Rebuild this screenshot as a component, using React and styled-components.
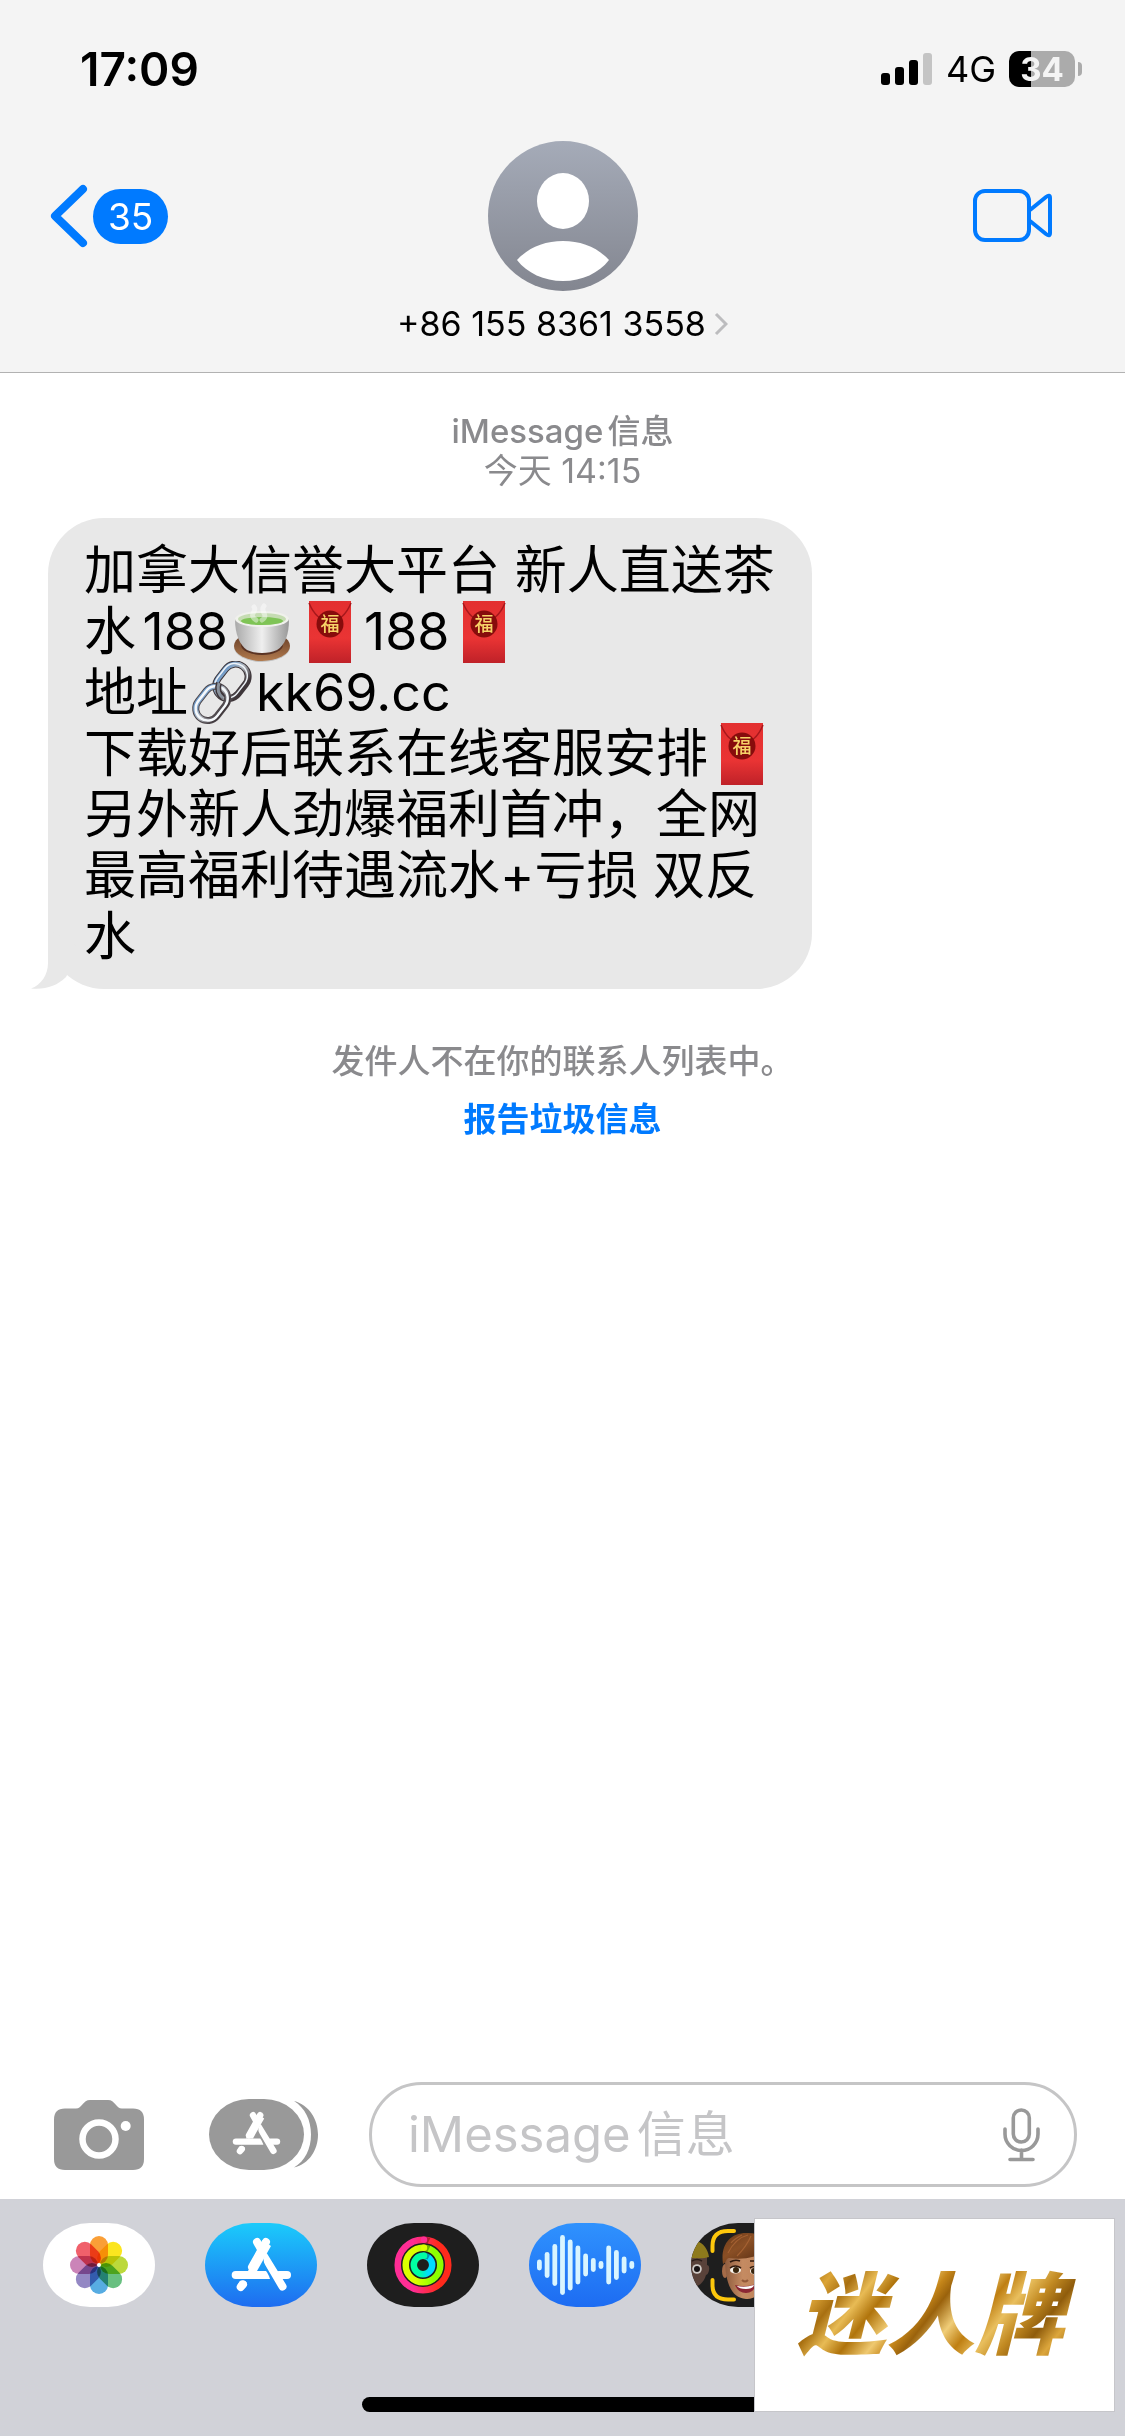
import React, { useState } from "react";
import styled, { createGlobalStyle } from "styled-components";

const GlobalStyle = createGlobalStyle`
  * {
    box-sizing: border-box;
  }
  body {
    margin: 0;
    background: #fff;
    overflow-x: hidden;
    font-family: Inter, "Noto Sans CJK SC", sans-serif;
    text-autospace: normal;
  }
  button, input {
    font: inherit;
    color: inherit;
    border: 0;
    padding: 0;
    background: none;
  }
  svg {
    display: block;
    flex: none;
  }
`;

const Screen = styled.div`
  display: flex;
  flex-direction: column;
  min-height: 100vh;
  overflow: hidden;
`;
const Header = styled.header`
  padding-bottom: 28px;
  background: #f4f4f4;
  border-bottom: 1px solid #b2b2b2;
`;
const StatusBar = styled.div`
  display: flex;
  align-items: center;
  justify-content: space-between;
  padding: 38px 43px 41px 80px;
  line-height: 62px;
`;
const Clock = styled.div`
  font-size: 46px;
  font-weight: 600;
`;
const StatusIcons = styled.div`
  display: flex;
  align-items: center;
  gap: 13px;
`;
const Network = styled.span`
  font-size: 36px;
`;
const Battery = styled.div`
  display: flex;
  align-items: center;
  gap: 3px;
`;
const BatteryBody = styled.div`
  width: 66px;
  height: 36px;
  border-radius: 10px;
  background: linear-gradient(90deg, #000 33%, #ababab 33%);
  color: #f4f4f4;
  font-size: 33px;
  font-weight: 700;
  line-height: 36px;
  text-align: center;
`;
const BatteryTip = styled.div`
  width: 4px;
  height: 14px;
  border-radius: 0 4px 4px 0;
  background: #ababab;
`;
const Nav = styled.nav`
  display: grid;
  grid-template-columns: 1fr auto 1fr;
  align-items: center;
  padding: 0 50px;
`;
const BackButton = styled.button`
  display: flex;
  align-items: center;
  justify-self: start;
  gap: 5px;
`;
const Badge = styled.span`
  padding: 0 15px;
  border-radius: 28px;
  background: #007aff;
  color: #fff;
  font-size: 37px;
  line-height: 55px;
`;
const VideoButton = styled.button`
  justify-self: end;
  padding-right: 22px;
`;
const ContactButton = styled.button`
  display: flex;
  align-items: center;
  gap: 8px;
  margin: 13px auto 0;
  font-size: 34px;
  line-height: 40px;
`;

const Conversation = styled.main`
  flex: 1;
  padding: 39px 48px;
`;
const Stamp = styled.div`
  color: #8a8a8d;
  font-size: ${(props) => (props.$strong ? 33 : 34)}px;
  font-weight: ${(props) => (props.$strong ? 500 : 400)};
  line-height: 39px;
  text-align: center;
`;
const Bubble = styled.div`
  position: relative;
  width: fit-content;
  max-width: 765px;
  margin-top: 28px;
  padding: 22px 36px;
  border-radius: 56px;
  background: #e8e8e8;
  font-size: 52px;
  line-height: 61px;
`;
const Tail = styled.svg`
  position: absolute;
  left: -17px;
  bottom: 0;
`;
const Emoji = styled.svg`
  display: inline-block;
  margin: -14px 0 -6px;
  vertical-align: middle;
`;
const Notice = styled.p`
  margin: 52px 0 0;
  color: #8a8a8d;
  font-size: 33px;
  font-weight: 500;
  line-height: 40px;
  text-align: center;
`;
const ReportButton = styled.button`
  display: block;
  margin: 18px auto 0;
  color: #007aff;
  font-size: 33px;
  font-weight: 700;
  line-height: 40px;
`;

const Composer = styled.form`
  display: flex;
  align-items: center;
  padding: 22px 48px 12px 54px;
  color: #999;
`;
const AppsButton = styled.button`
  margin: 0 51px 0 65px;
`;
const Field = styled.label`
  display: flex;
  flex: 1;
  align-items: center;
  min-width: 0;
  height: 105px;
  padding: 0 34px 0 36px;
  border: 3px solid #c5c5c6;
  border-radius: 53px;
`;
const TextInput = styled.input`
  flex: 1;
  min-width: 0;
  color: #000;
  font-size: 49px;
  outline: none;
  &::placeholder {
    color: #c5c5c7;
    opacity: 1;
  }
`;

const Drawer = styled.footer`
  position: relative;
  padding: 24px 0 24px 43px;
  background: #d1d2d8;
`;
const AppRow = styled.div`
  display: flex;
  gap: 50px;
`;
const AppButton = styled.button`
  flex: none;
  width: 112px;
  height: 84px;
  border-radius: 47px / 42px;
  background: ${(props) => props.$fill};
  overflow: hidden;
`;
const HomeBar = styled.div`
  width: 401px;
  height: 15px;
  margin: 90px auto 0;
  border-radius: 8px;
  background: #000;
`;
const HomeRow = styled.div`
  padding-right: 43px;
`;
const Stamped = styled.div`
  position: absolute;
  top: 19px;
  right: 10px;
  display: flex;
  align-items: center;
  justify-content: center;
  width: 361px;
  height: 194px;
  border: 1px solid #c6c6ca;
  background: #fff;
`;
const GoldText = styled.span`
  padding: 0 16px 0 8px;
  background: linear-gradient(
    128deg,
    #a06a0e 8%,
    #dba437 15%,
    #a86f10 21%,
    #e8bb55 27%,
    #b0740c 33%,
    #efc970 40%,
    #c5861a 45%,
    #9a620c 49%,
    #f0cd78 56%,
    #bf7f12 62%,
    #e9bf5e 68%,
    #c28a22 74%,
    #8f5c0c 80%,
    #dca63c 86%,
    #9b650e 93%
  );
  background-clip: text;
  color: transparent;
  font-size: 89px;
  font-style: italic;
  font-weight: 900;
  line-height: 120px;
`;

const SignalIcon = () => (
  <svg width="52" height="32" viewBox="0 0 52 32">
    <rect x="0" y="20" width="9" height="12" rx="3" />
    <rect x="14" y="14" width="9" height="18" rx="3" />
    <rect x="28" y="7" width="9" height="25" rx="3" />
    <rect x="42" y="0" width="9" height="32" rx="3" fill="#c4c4c4" />
  </svg>
);

const BackIcon = () => (
  <svg width="38" height="64" viewBox="0 0 38 64" fill="none">
    <path
      d="M33 5 5 32l28 27"
      stroke="#007aff"
      strokeWidth="8"
      strokeLinecap="round"
      strokeLinejoin="round"
    />
  </svg>
);

const VideoIcon = () => (
  <svg width="80" height="54" viewBox="0 0 80 54" fill="none">
    <g stroke="#007aff" strokeWidth="4" strokeLinejoin="round">
      <rect x="2" y="2" width="54" height="49" rx="10" />
      <path d="M57 21 73 8Q77 5 77 9V44Q77 48 73 45L57 32" />
    </g>
  </svg>
);

const Avatar = () => (
  <svg width="150" height="150" viewBox="0 0 150 150">
    <defs>
      <linearGradient id="avatar" x1="0" y1="0" x2="0" y2="1">
        <stop offset="0" stopColor="#a5abb8" />
        <stop offset="1" stopColor="#838690" />
      </linearGradient>
    </defs>
    <circle cx="75" cy="75" r="75" fill="url(#avatar)" />
    <ellipse cx="75" cy="60" rx="26" ry="28" fill="#fff" />
    <path
      d="M29 119C41 106 57 100 75 100s34 6 46 19c-10 13-27 21-46 21s-36-8-46-21Z"
      fill="#fff"
    />
  </svg>
);

const DisclosureIcon = () => (
  <svg width="14" height="24" viewBox="0 0 14 24" fill="none">
    <path d="M2 2l10 10L2 22" stroke="#bcbcbe" strokeWidth="3" />
  </svg>
);

const TeaEmoji = () => (
  <Emoji width="68" height="64" viewBox="0 0 68 64" role="img" aria-label="茶">
    <defs>
      <linearGradient id="cup" x1="0" y1="0" x2="1" y2="0">
        <stop offset="0" stopColor="#a9a9a9" />
        <stop offset=".5" stopColor="#efefef" />
        <stop offset="1" stopColor="#989898" />
      </linearGradient>
      <linearGradient id="saucer" x1="0" y1="0" x2="0" y2="1">
        <stop offset="0" stopColor="#5c3420" />
        <stop offset="1" stopColor="#b27b4e" />
      </linearGradient>
    </defs>
    <ellipse cx="34" cy="47" rx="28" ry="15" fill="#8c8c8c" opacity=".4" />
    <ellipse cx="34" cy="46" rx="28" ry="15" fill="url(#saucer)" />
    <ellipse cx="34" cy="45" rx="21" ry="10" fill="#5a3323" />
    <path
      d="M7 19c0 16 5 26 12 31 8 4 22 4 30 0 8-5 12-15 12-31Z"
      fill="url(#cup)"
    />
    <ellipse cx="34" cy="19" rx="27" ry="8" fill="#f0f1ec" />
    <ellipse cx="34" cy="19" rx="24" ry="6" fill="#c5dcb2" />
    <ellipse cx="34" cy="21" rx="21" ry="4" fill="#7fc456" />
    <path
      d="M28 20c-9-6 2-8-2-13M34 20c8-5-3-8 2-14"
      fill="none"
      stroke="#fff"
      strokeWidth="5"
      strokeLinecap="round"
      opacity=".45"
    />
  </Emoji>
);

const EnvelopeEmoji = () => (
  <Emoji width="68" height="64" viewBox="0 0 68 64" role="img" aria-label="红包">
    <defs>
      <linearGradient id="envelope" x1="0" y1="0" x2="0" y2="1">
        <stop offset="0" stopColor="#e33030" />
        <stop offset=".6" stopColor="#ea3434" />
        <stop offset="1" stopColor="#bf2128" />
      </linearGradient>
    </defs>
    <rect x="13" y="1" width="42" height="62" fill="url(#envelope)" />
    <path
      d="M13 3c5 12 12 18 21 18S50 15 55 3"
      fill="none"
      stroke="#a8181c"
      strokeWidth="1.5"
    />
    <circle cx="34" cy="24" r="13.5" fill="#870c0c" />
    <text
      x="34"
      y="31"
      fill="#f7d368"
      fontSize="19"
      fontWeight="500"
      fontFamily='"Noto Sans CJK SC", sans-serif'
      textAnchor="middle"
    >
      福
    </text>
  </Emoji>
);

const LinkEmoji = () => (
  <Emoji width="68" height="64" viewBox="0 0 68 64" role="img" aria-label="链接">
    <defs>
      <linearGradient id="steel" x1="0" y1="0" x2="1" y2="0">
        <stop offset="0" stopColor="#6f9ac8" />
        <stop offset=".5" stopColor="#b4b9c0" />
        <stop offset="1" stopColor="#3d3539" />
      </linearGradient>
    </defs>
    <g fill="none">
      <g transform="rotate(38 44 21)">
        <rect x="31" y="2" width="25" height="37" rx="12.5" stroke="#3d3539" strokeWidth="7" />
        <rect x="31" y="2" width="25" height="37" rx="12.5" stroke="url(#steel)" strokeWidth="5" />
        <rect x="30" y="2" width="25" height="37" rx="12.5" stroke="#eef3f8" strokeWidth="1.5" />
      </g>
      <g transform="rotate(38 24 42)">
        <rect x="12" y="24" width="24" height="37" rx="12" stroke="#4c4549" strokeWidth="7" />
        <rect x="12" y="24" width="24" height="37" rx="12" stroke="url(#steel)" strokeWidth="5" />
        <rect x="12" y="24" width="24" height="37" rx="12" stroke="#f5f8fb" strokeWidth="2.5" />
      </g>
      <path d="M31 22c-2 6-1 11 4 15" stroke="#3d3539" strokeWidth="6" />
      <path d="M31 22c-2 6-1 11 4 15" stroke="#8a929c" strokeWidth="3" />
    </g>
  </Emoji>
);

const CameraIcon = () => (
  <svg width="90" height="70" viewBox="0 0 90 70" fill="currentColor">
    <path d="M11 8.500H22C28 8.500 29 0 36 0H54C61 0 62 8.500 68 8.500H79Q90 8.500 90 19.500V59Q90 70 79 70H11Q0 70 0 59V19.500Q0 8.500 11 8.500Z" />
    <circle cx="45" cy="39" r="16.500" fill="none" stroke="#fff" strokeWidth="6.500" />
    <circle cx="71.700" cy="26" r="5" fill="#fff" />
  </svg>
);

// The "A" made of three sticks, drawn in a 59x53 box
const AppStoreGlyph = () => (
  <g fill="#fff" stroke="none">
    <g stroke="#fff" strokeWidth="8" strokeLinecap="round" fill="none">
      <path d="M25 4l4.500 8" />
      <path d="M34 4 20 29" />
      <path d="M47 37h8" />
      <path d="M11 46.500 8.700 49" />
    </g>
    <path d="M30.500 2 16 33h9l14-25Z" />
    <path d="M3.700 33H34c1.500 2 3 4.500 4 8H3.700a4 4 0 0 1 0-8Z" />
    <path d="M34.700 15c-3.500 4-4 8-1.500 12L47 50.500a4 4 0 0 0 7-4Z" />
    <path d="M7.800 43c3-1.200 6 0 7 1.500l-2.800 5.300-6.500-3Z" />
  </g>
);

const AppsIcon = () => (
  <svg width="109" height="71" viewBox="0 0 109 71" fill="currentColor">
    <rect width="95" height="71" rx="40" ry="35.500" />
    <path d="M85 2C100 6 109 20 109 35.500S100 65 85 68.500C96 62 102 50 102 35.500S96 9 85 2Z" />
    <g transform="translate(24 13) scale(.8)">
      <AppStoreGlyph />
    </g>
  </svg>
);

const MicIcon = () => (
  <svg width="37" height="54" viewBox="0 0 37 54" fill="none">
    <g stroke="#999" strokeWidth="3.600" strokeLinecap="round">
      <rect x="10.300" y="2" width="16" height="32" rx="8" />
      <path d="M2 21v5a16.400 16.400 0 0 0 33 0v-5M18.500 42v9M7 51.500h23" />
    </g>
  </svg>
);

const PETALS = [
  "#fa9f37",
  "#fbe51f",
  "#bcd93b",
  "#68c080",
  "#57ace2",
  "#9488c4",
  "#cb84b8",
  "#f0606b",
];

const PhotosArt = () => (
  <svg width="112" height="84" viewBox="0 0 112 84">
    <g transform="translate(56 42)">
      {PETALS.map((color, idx) => (
        <rect
          key={color}
          x="-9"
          y="-29"
          width="18"
          height="28"
          rx="9"
          fill={color}
          transform={`rotate(${idx * 45})`}
          style={{ mixBlendMode: "multiply" }}
        />
      ))}
      <circle r="2" fill="#fff" />
    </g>
  </svg>
);

const AppStoreArt = () => (
  <svg width="112" height="84" viewBox="0 0 112 84">
    <g transform="translate(27 15)">
      <AppStoreGlyph />
    </g>
  </svg>
);

const RINGS = [
  { id: "move", r: 25.3, from: "#ff2d95", to: "#ff2a1c" },
  { id: "exercise", r: 17.3, from: "#dcff00", to: "#8dff00" },
  { id: "stand", r: 9.2, from: "#00ffa3", to: "#00dcff" },
];

const FitnessArt = () => (
  <svg width="112" height="84" viewBox="0 0 112 84" fill="none">
    {RINGS.map(({ id, r, from, to }) => (
      <g key={id}>
        <linearGradient id={id} x1="0" y1="0" x2="1" y2="0">
          <stop offset=".3" stopColor={from} />
          <stop offset=".8" stopColor={to} />
        </linearGradient>
        <circle cx="56" cy="42" r={r} stroke={`url(#${id})`} strokeWidth="6.500" />
        <path
          d={`M57 ${42 - r}q3 0 5 1`}
          stroke="#000"
          strokeWidth="6"
          opacity=".3"
        />
        <circle cx="57" cy={42 - r} r="3.200" fill={from} />
      </g>
    ))}
  </svg>
);

const WAVE = [11, 26, 42, 60, 51, 39, 23, 14, 8, 39, 30, 17, 8];

const AudioArt = () => (
  <svg width="112" height="84" viewBox="0 0 112 84" fill="#d9f5ff">
    {WAVE.map((height, idx) => (
      <rect
        key={idx}
        x={8 + idx * 7.7}
        y={42 - height / 2}
        width="4.800"
        height={height}
        rx="2.400"
      />
    ))}
  </svg>
);

const MemojiArt = () => (
  <svg width="112" height="84" viewBox="0 0 112 84">
    <defs>
      <linearGradient id="hair" x1="0" y1="0" x2="1" y2="1">
        <stop offset="0" stopColor="#6b3918" />
        <stop offset=".4" stopColor="#8a4f25" />
        <stop offset="1" stopColor="#4a250e" />
      </linearGradient>
      <linearGradient id="skin" x1="0" y1="0" x2="1" y2="0">
        <stop offset="0" stopColor="#8f5c3e" />
        <stop offset=".4" stopColor="#c58b62" />
        <stop offset="1" stopColor="#bb8058" />
      </linearGradient>
    </defs>
    <path d="M0 30h16v12c4 0 2 10-1 10-2 8-8 12-15 13Z" fill="#59423a" />
    <path d="M0 18h6c6 2 11 8 12 16-6 2-12 1-18 1Z" fill="#8e7a1c" />
    <circle cx="6" cy="46" r="4.800" fill="#cfcac6" />
    <circle cx="6" cy="46" r="3" fill="#191313" />
    <path d="M1 38q5-3 10 0" fill="none" stroke="#2c1e1a" strokeWidth="1.500" />
    <g fill="none" stroke="#fdc70c" strokeWidth="4" strokeLinecap="round">
      <path d="M21.500 28v-5Q21.500 8 37 8h6" />
      <path d="M21.500 57v5Q21.500 76.500 37 76.500h6" />
    </g>
    <ellipse cx="34" cy="48" rx="3" ry="7" fill="#a56b48" />
    <path
      d="M34 35c0 24 6 40 21 41s23-17 23-41c-4-14-40-14-44 0Z"
      fill="url(#skin)"
    />
    <path
      d="M32 41c-3-20 8-32 25-31 15 0 26 10 23 27l-3 4c-3-3-4-7-4-12-7 5-20 8-35 6-3 0-2 4-6 6Z"
      fill="url(#hair)"
    />
    <path
      d="M37 30c5-10 12-16 20-18M46 33c6-6 11-13 14-20M40 20c3-4 7-6 11-8"
      fill="none"
      stroke="#b06a38"
      strokeWidth="1.200"
      opacity=".7"
    />
    <g fill="#f7f2ea">
      <ellipse cx="44.500" cy="47" rx="5.500" ry="3.600" />
      <ellipse cx="64" cy="48" rx="5" ry="3.600" />
    </g>
    <circle cx="45" cy="47" r="3" fill="#38240c" />
    <circle cx="63" cy="48" r="3" fill="#38240c" />
    <path
      d="M39 45q5-4 11 0M39 39q5-3 10-1M59 45q4-3 9 0M59 38h8"
      fill="none"
      stroke="#301a0e"
      strokeWidth="1.600"
    />
    <path d="M51 57q3 3 6 0" fill="none" stroke="#935a3a" strokeWidth="2" />
    <path d="M44 62q10 3 21-1-2 9-10 9t-11-8Z" fill="#8c2734" />
    <path d="M46 63q8 2 17-1-1 4-8 4t-9-3Z" fill="#fff" />
  </svg>
);

const APPS = [
  { name: "照片", fill: "#fff", Art: PhotosArt },
  {
    name: "App Store",
    fill: "linear-gradient(#1bcbfb, #1e6cf0)",
    Art: AppStoreArt,
  },
  { name: "健身记录", fill: "#1e1e1e", Art: FitnessArt },
  {
    name: "音频信息",
    fill: "linear-gradient(#2f92fe, #1d6cf2)",
    Art: AudioArt,
  },
  { name: "拟我表情", fill: "#1e1e1e", Art: MemojiArt },
  { name: "音乐", fill: "linear-gradient(#fb5c74, #fa233b)" },
];

function App() {
  const [text, setText] = useState("");

  return (
    <Screen>
      <GlobalStyle />
      <Header>
        <StatusBar>
          <Clock>17:09</Clock>
          <StatusIcons>
            <SignalIcon />
            <Network>4G</Network>
            <Battery>
              <BatteryBody>34</BatteryBody>
              <BatteryTip />
            </Battery>
          </StatusIcons>
        </StatusBar>
        <Nav>
          <BackButton type="button" aria-label="返回">
            <BackIcon />
            <Badge>35</Badge>
          </BackButton>
          <Avatar />
          <VideoButton type="button" aria-label="FaceTime">
            <VideoIcon />
          </VideoButton>
        </Nav>
        <ContactButton type="button">
          +86 155 8361 3558
          <DisclosureIcon />
        </ContactButton>
      </Header>

      <Conversation>
        <Stamp $strong>iMessage信息</Stamp>
        <Stamp>今天 14:15</Stamp>
        <Bubble>
          加拿大信誉大平台 新人直送茶
          <br />
          水188
          <TeaEmoji />
          <EnvelopeEmoji />
          188
          <EnvelopeEmoji />
          <br />
          地址
          <LinkEmoji />
          kk69.cc
          <br />
          下载好后联系在线客服安排
          <EnvelopeEmoji />
          <br />
          另外新人劲爆福利首冲，全网
          <br />
          最高福利待遇流水+亏损 双反
          <br />水
          <Tail width="60" height="60" viewBox="0 0 60 60">
            <path
              d="M17 0V34C17 46 10 56 0 59.500C14 61 26 57 35 48L50 20Z"
              fill="#e8e8e8"
            />
          </Tail>
        </Bubble>
        <Notice>发件人不在你的联系人列表中。</Notice>
        <ReportButton type="button">报告垃圾信息</ReportButton>
      </Conversation>

      <Composer onSubmit={(e) => e.preventDefault()}>
        <button type="button" aria-label="相机">
          <CameraIcon />
        </button>
        <AppsButton type="button" aria-label="App">
          <AppsIcon />
        </AppsButton>
        <Field>
          <TextInput
            type="text"
            aria-label="iMessage信息"
            placeholder="iMessage信息"
            value={text}
            onChange={(e) => setText(e.target.value)}
          />
          <button type="button" aria-label="听写">
            <MicIcon />
          </button>
        </Field>
      </Composer>

      <Drawer>
        <AppRow>
          {APPS.map(({ name, fill, Art }) => (
            <AppButton key={name} type="button" aria-label={name} $fill={fill}>
              {Art && <Art />}
            </AppButton>
          ))}
        </AppRow>
        <HomeRow>
          <HomeBar />
        </HomeRow>
        <Stamped>
          <GoldText>迷人牌</GoldText>
        </Stamped>
      </Drawer>
    </Screen>
  );
}

export default App;
